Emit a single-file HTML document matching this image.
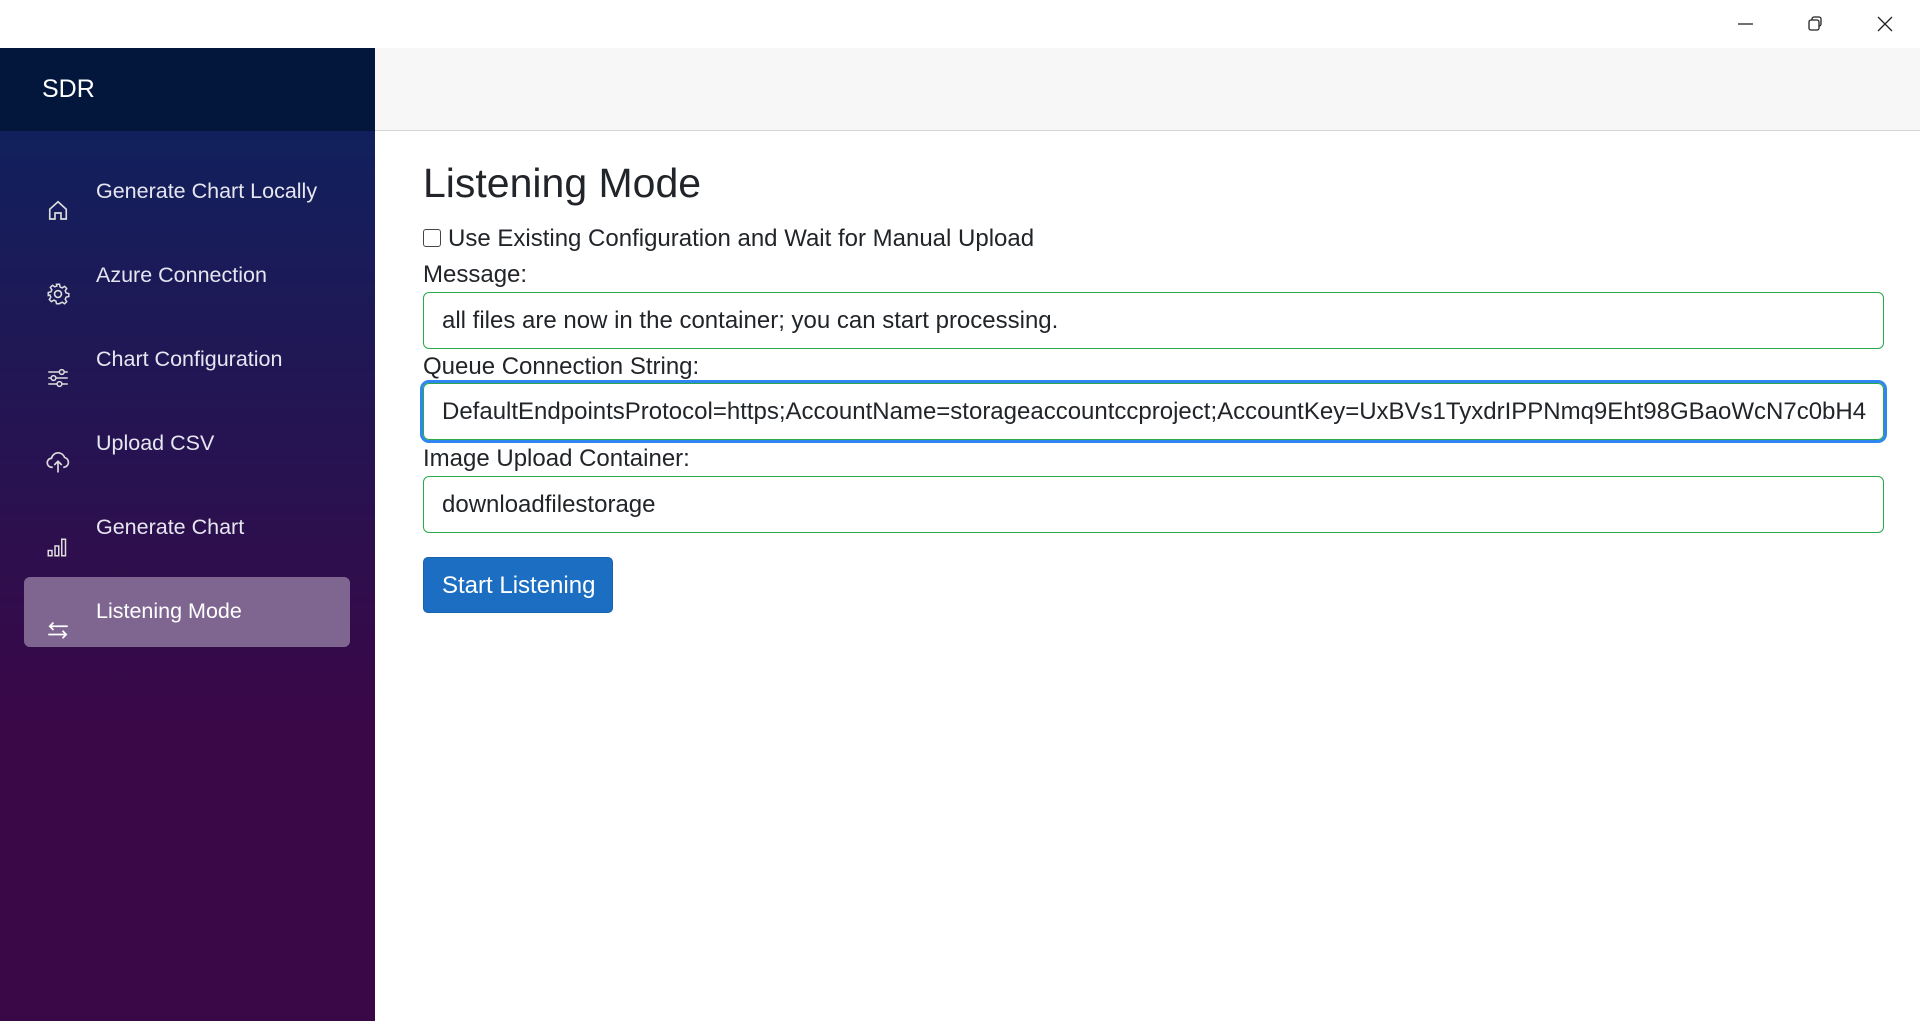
<!DOCTYPE html>
<html><head><meta charset="utf-8"><style>
*{box-sizing:border-box;margin:0;padding:0}
body{width:1920px;height:1021px;overflow:hidden;background:#fff;font-family:"Liberation Sans",Arial,sans-serif;color:#212529;position:relative}
.tb{position:absolute;left:0;top:0;width:1920px;height:48px;background:#fff}
.side{position:absolute;left:0;top:48px;width:375px;height:973px;background:linear-gradient(180deg,#0b2460 0%,#3a0747 70%,#3a0747 100%)}
.sh{position:absolute;left:0;top:0;width:375px;height:83px;background:#03173d;color:#fff;font-size:25px;padding:27px 0 0 42px}
.nav{position:absolute;left:24px;width:326px;height:70px;color:#e6e6f0;font-size:21.5px}
.nav span{position:absolute;left:72px;top:11px}
.nav svg{position:absolute;left:22px;top:30px}
.nav.act{background:#7e6690;border-radius:6px;color:#fff}
.nav.act span{top:22px}
.nav.act svg{top:41px}
.top{position:absolute;left:375px;top:48px;width:1545px;height:83px;background:#f7f7f7;border-bottom:1px solid #d6d5d5}
.m{position:absolute;left:423px}
h2{position:absolute;left:423px;top:160px;font-size:41px;font-weight:400;color:#212529}
.lbl{font-size:24px}
.in{position:absolute;left:423px;width:1461px;height:57px;border:1.5px solid #2aa84a;border-radius:6px;font-size:24px;padding:14px 0 0 18px;white-space:nowrap;overflow:hidden}
.btn{position:absolute;left:423px;top:557px;width:190px;height:56px;background:#1b6ec2;border:1px solid #1861ac;border-radius:5px;color:#fff;font-size:24px;padding:14px 0 0 18px}
</style></head><body>
<div class="tb">
<svg style="position:absolute;left:1736px;top:16px" width="20" height="16"><line x1="2" y1="8" x2="17" y2="8" stroke="#222" stroke-width="1.3"/></svg>
<svg style="position:absolute;left:1806px;top:14px" width="20" height="20"><rect x="3" y="6" width="10" height="10" rx="2" fill="none" stroke="#222" stroke-width="1.3"/><path d="M6 6V5a2 2 0 0 1 2-2h5a2 2 0 0 1 2 2v5a2 2 0 0 1-2 2h-0" fill="none" stroke="#222" stroke-width="1.3"/></svg>
<svg style="position:absolute;left:1875px;top:14px" width="20" height="20"><path d="M3 3L17 17M17 3L3 17" stroke="#222" stroke-width="1.3"/></svg>
</div>
<div class="side">
<div class="sh">SDR</div>
<div class="nav" style="top:120px"><span>Generate Chart Locally</span><svg width="24" height="24" viewBox="0 0 16 16"><path d="M2.5 14V7.5L8 2.5l5.5 5V14H10V10H6v4z" fill="none" stroke="#ddd" stroke-width="1.1"/></svg></div>
<div class="nav" style="top:204px"><span>Azure Connection</span><svg width="24" height="24" viewBox="0 0 16 16"><circle cx="8" cy="8" r="2.3" fill="none" stroke="#ddd" stroke-width="1.1"/><path d="M7 1.5h2l.4 1.8 1.4.6 1.6-1 1.4 1.4-1 1.6.6 1.4 1.8.4v2l-1.8.4-.6 1.4 1 1.6-1.4 1.4-1.6-1-1.4.6L9 14.5H7l-.4-1.8-1.4-.6-1.6 1-1.4-1.4 1-1.6-.6-1.4L1.5 9V7l1.8-.4.6-1.4-1-1.6 1.4-1.4 1.6 1 1.4-.6z" fill="none" stroke="#ddd" stroke-width="1"/></svg></div>
<div class="nav" style="top:288px"><span>Chart Configuration</span><svg width="24" height="24" viewBox="0 0 16 16"><path d="M1.5 4h13M1.5 8h13M1.5 12h13" stroke="#ddd" stroke-width="1"/><circle cx="10.5" cy="4" r="1.6" fill="#2a1a5a" stroke="#ddd"/><circle cx="5" cy="8" r="1.6" fill="#2a1a5a" stroke="#ddd"/><circle cx="9" cy="12" r="1.6" fill="#2a1a5a" stroke="#ddd"/></svg></div>
<div class="nav" style="top:372px"><span>Upload CSV</span><svg width="24" height="24" viewBox="0 0 16 16"><path d="M4.5 11.5H4a3 3 0 0 1-.3-6A4.5 4.5 0 0 1 12.4 5a3.3 3.3 0 0 1-.4 6.5h-.5M8 15V7.5M5.5 10L8 7.5 10.5 10" fill="none" stroke="#ddd" stroke-width="1.1"/></svg></div>
<div class="nav" style="top:456px"><span>Generate Chart</span><svg width="24" height="24" viewBox="0 0 16 16"><rect x="1.5" y="11" width="2.5" height="3.5" fill="none" stroke="#ddd"/><rect x="6" y="8" width="2.5" height="6.5" fill="none" stroke="#ddd"/><rect x="10.5" y="3.5" width="2.5" height="11" fill="none" stroke="#ddd"/></svg></div>
<div class="nav act" style="top:529px"><span>Listening Mode</span><svg width="24" height="24" viewBox="0 0 16 16"><path d="M14.5 5.5h-12M5 3L2.5 5.5 5 8M1.5 11h12M11 8.5l2.5 2.5L11 13.5" fill="none" stroke="#fff" stroke-width="1.1"/></svg></div>
</div>
<div class="top"></div>
<h2>Listening Mode</h2>
<div class="m lbl" style="top:225px"><span style="display:inline-block;width:18px;height:18px;border:1.3px solid #444;border-radius:3px;vertical-align:-1px;margin-right:7px"></span>Use Existing Configuration and Wait for Manual Upload</div>
<div class="m lbl" style="top:261px">Message:</div>
<div class="in" style="top:292px">all files are now in the container; you can start processing.</div>
<div class="m lbl" style="top:353px">Queue Connection String:</div>
<div class="in" style="top:383px;box-shadow:0 0 0 3px #2f86f0">DefaultEndpointsProtocol=https;AccountName=storageaccountccproject;AccountKey=UxBVs1TyxdrIPPNmq9Eht98GBaoWcN7c0bH4</div>
<div class="m lbl" style="top:445px">Image Upload Container:</div>
<div class="in" style="top:476px">downloadfilestorage</div>
<div class="btn">Start Listening</div>
</body></html>
